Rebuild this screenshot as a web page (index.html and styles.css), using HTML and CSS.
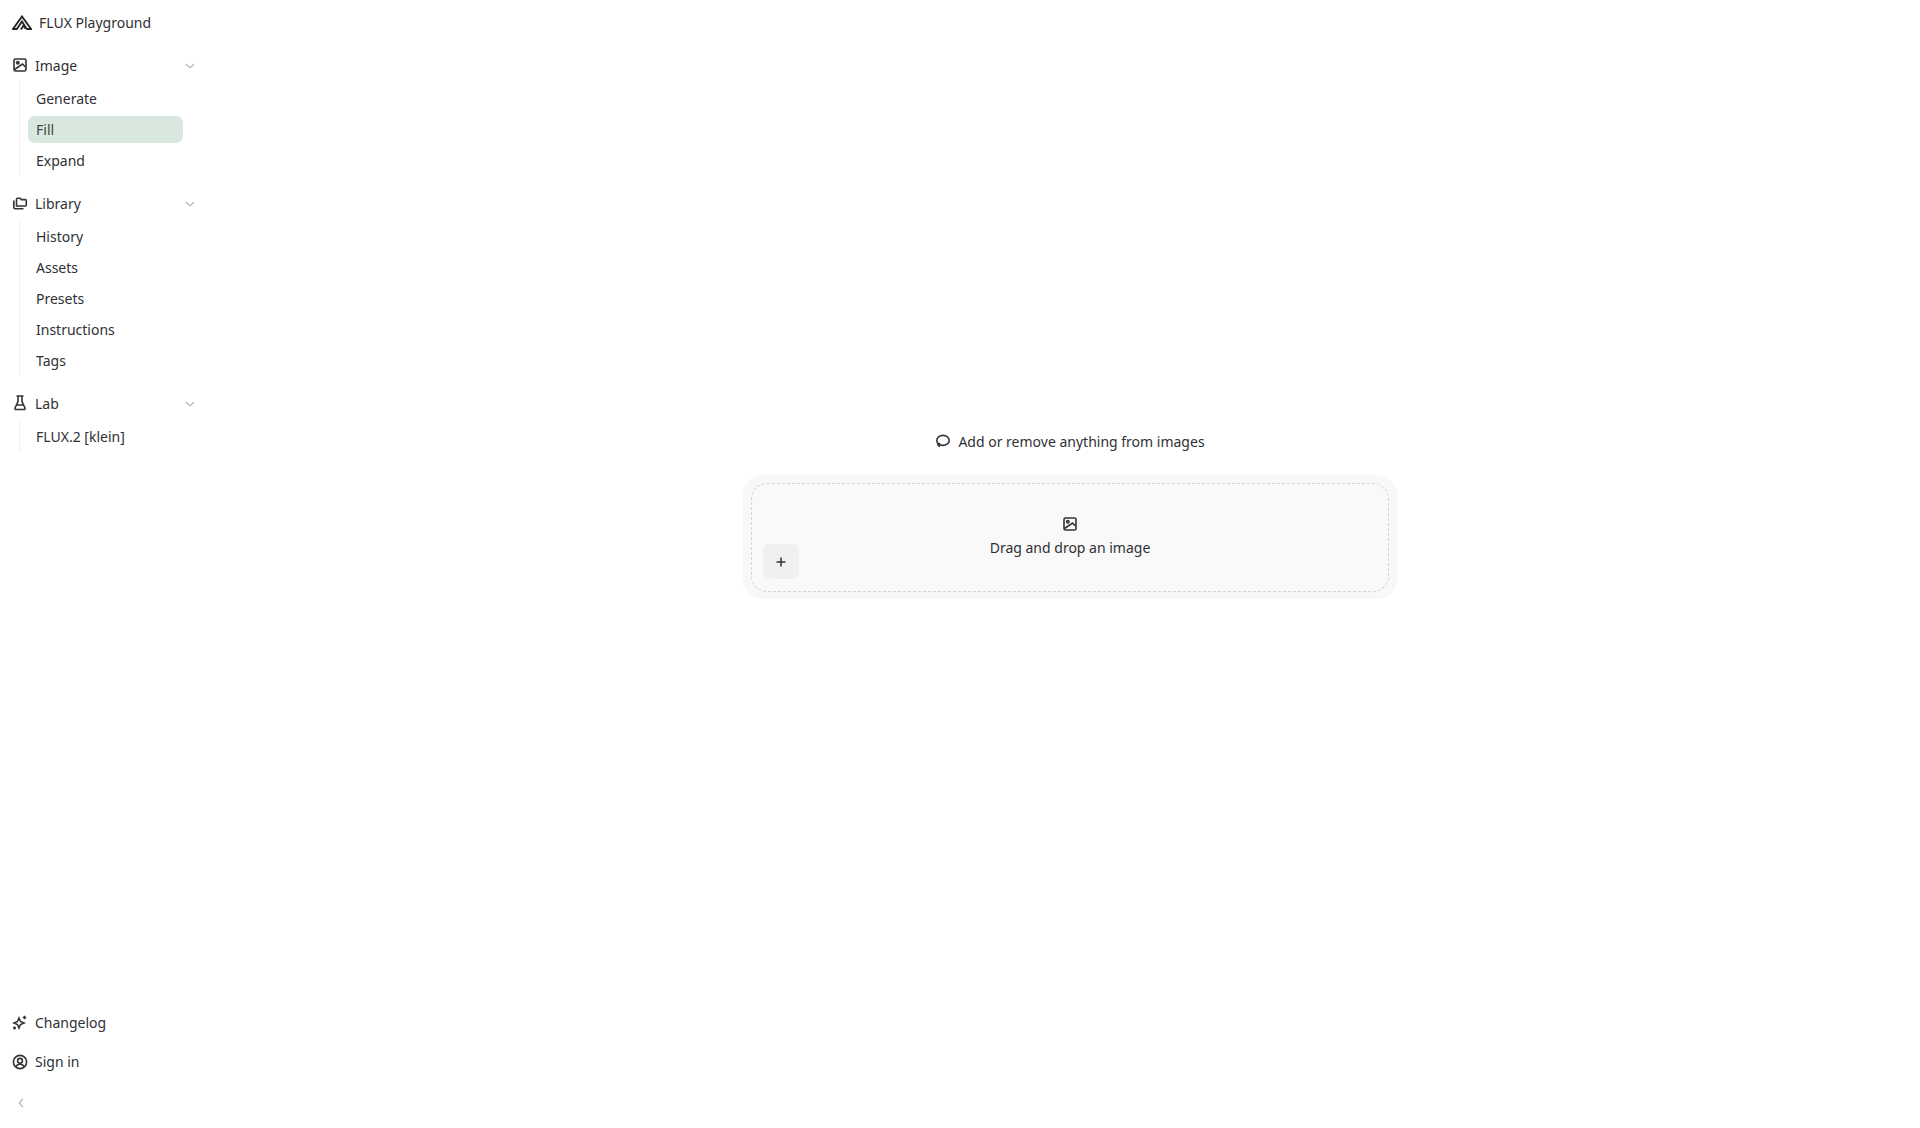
FILE: index.html
```html
<!DOCTYPE html>
<html lang="en">
<head>
    <meta charset="UTF-8">
    <meta name="viewport" content="width=device-width, initial-scale=1.0">
    <title>FLUX Playground</title>
    <link rel="stylesheet" href="styles.css">
</head>
<body>
    <div class="app">
        <aside class="sidebar">
            <div class="brand">
                <svg class="brand-logo" viewBox="0 0 20 15" width="20" height="15" fill="none" stroke="#27272a" stroke-width="1.9">
                    <path d="M5 14H1L10 1.500 19 14h-4"/>
                    <path d="M4.500 14.500L10 6.500l5 8M9 14.500l2.500-4 2 3"/>
                </svg>
                <span>FLUX Playground</span>
            </div>

            <div class="nav-group">
                <div class="nav-head">
                    <svg class="icon" viewBox="0 0 16 16"><rect x="2" y="2" width="12" height="12" rx="1.500"/><circle cx="5.800" cy="5.800" r="1.200"/><path d="M2.500 12.500L10.500 7l3 3"/></svg>
                    <span class="nav-title">Image</span>
                    <svg class="chevron" viewBox="0 0 12 12"><path d="M2 4.200l4 3.600 4-3.600"/></svg>
                </div>
                <div class="nav-list">
                    <a class="nav-item">Generate</a>
                    <a class="nav-item active">Fill</a>
                    <a class="nav-item">Expand</a>
                </div>
            </div>

            <div class="nav-group">
                <div class="nav-head">
                    <svg class="icon" viewBox="0 0 16 16"><path d="M4.500 11V4.200c0-.6.4-1 1-1h2.600l1.200 1.400h4c.6 0 1 .4 1 1V10c0 .6-.4 1-1 1z"/><path d="M1.800 5.500v6.800c0 .8.6 1.400 1.400 1.400h8.300"/></svg>
                    <span class="nav-title">Library</span>
                    <svg class="chevron" viewBox="0 0 12 12"><path d="M2 4.200l4 3.600 4-3.600"/></svg>
                </div>
                <div class="nav-list">
                    <a class="nav-item">History</a>
                    <a class="nav-item">Assets</a>
                    <a class="nav-item">Presets</a>
                    <a class="nav-item">Instructions</a>
                    <a class="nav-item">Tags</a>
                </div>
            </div>

            <div class="nav-group">
                <div class="nav-head">
                    <svg class="icon" viewBox="0 0 16 16"><path d="M4.500 1h7M6 1v5.500L3 13c-.3.8.1 1.500.9 1.500h8.200c.8 0 1.200-.7.900-1.500L10 6.500V1M4.500 10h7"/></svg>
                    <span class="nav-title">Lab</span>
                    <svg class="chevron" viewBox="0 0 12 12"><path d="M2 4.200l4 3.600 4-3.600"/></svg>
                </div>
                <div class="nav-list">
                    <a class="nav-item">FLUX.2 [klein]</a>
                </div>
            </div>

            <div class="sidebar-foot">
                <div class="nav-head foot-row">
                    <svg class="icon" viewBox="0 0 16 16"><path d="M7 3l1.500 3.500L12 8 8.500 9.500 7 13 5.500 9.500 2 8l3.500-1.500z"/><path d="M12.500 .8v3.400M10.800 2.500h3.400M2.500 11.500v3M1 13h3"/></svg>
                    <span class="nav-title">Changelog</span>
                </div>
                <div class="nav-head foot-row">
                    <svg class="icon" viewBox="0 0 16 16"><circle cx="8" cy="8" r="6.600"/><circle cx="8" cy="6.800" r="2.400"/><path d="M3.800 12.800c.8-1.700 2.300-2.500 4.200-2.500s3.400.8 4.200 2.500"/></svg>
                    <span class="nav-title">Sign in</span>
                </div>
                <div class="collapse">
                    <svg class="chevron" viewBox="0 0 12 12"><path d="M7.800 2L4.200 6l3.600 4"/></svg>
                </div>
            </div>
        </aside>

        <main class="content">
            <div class="caption">
                <svg class="icon" viewBox="0 0 16 16"><path d="M4.600 11.600c1 .5 2.200.8 3.400.8 3.400 0 6.200-2.100 6.200-5S11.400 2.400 8 2.400 1.800 4.500 1.800 7.400c0 1.400.7 2.600 1.800 3.500"/><path d="M3.600 10.900c.8.600.9 1.600.3 3.100"/><circle cx="3.900" cy="11.500" r="1"/></svg>
                <span>Add or remove anything from images</span>
            </div>
            <div class="drop-wrap">
                <div class="dropzone">
                    <svg class="icon" viewBox="0 0 16 16"><rect x="2" y="2" width="12" height="12" rx="1.500"/><circle cx="5.800" cy="5.800" r="1.200"/><path d="M2.500 12.500L10.500 7l3 3"/></svg>
                    <span>Drag and drop an image</span>
                    <button class="add-btn">
                        <svg viewBox="0 0 12 12" width="12" height="12"><path d="M6 1.500v9M1.500 6h9"/></svg>
                    </button>
                </div>
            </div>
        </main>
    </div>
</body>
</html>
```

FILE: styles.css
```css
* {
    box-sizing: border-box;
}
body {
    margin: 0;
    background: white;
    font-family: "Noto Sans", "Open Sans", Arial, sans-serif;
    font-size: 14px;
    color: #303034;
}
.app {
    display: flex;
    height: 1128px;
}
.sidebar {
    width: 220px;
    padding: 0 12px;
    display: flex;
    flex-direction: column;
    flex-shrink: 0;
}
.brand {
    display: flex;
    align-items: center;
    gap: 7px;
    height: 44px;
    margin-bottom: 5px;
}
.brand-logo {
    flex-shrink: 0;
}
.nav-group {
    margin-bottom: 11.500px;
}
.nav-head {
    display: flex;
    align-items: center;
    gap: 7px;
    height: 32px;
}
.nav-title {
    flex: 1;
}
.icon {
    width: 16px;
    height: 16px;
    flex-shrink: 0;
    fill: none;
    stroke: #333338;
    stroke-width: 1.6;
}
.chevron {
    width: 12px;
    height: 12px;
    margin-top: 1px;
    margin-right: 12px;
    fill: none;
    stroke: #b4b4b8;
    stroke-width: 1.2;
}
.nav-list {
    display: flex;
    flex-direction: column;
    margin-left: 7px;
    padding-left: 8px;
    padding-top: 1.500px;
    border-left: 1px solid #f1f1f1;
}
.nav-item {
    display: flex;
    align-items: center;
    height: 31px;
    padding-left: 8px;
    width: 155px;
    position: relative;
}
.nav-item.active {
    color: #3f4a44;
}
.nav-item.active::before {
    content: "";
    position: absolute;
    left: 0;
    right: 0;
    top: 2px;
    bottom: 2px;
    background: #d9e8df;
    border-radius: 7px;
    z-index: -1;
}
.sidebar-foot {
    margin-top: auto;
    padding-bottom: 4px;
}
.foot-row {
    height: 39px;
}
.collapse {
    height: 43px;
    display: flex;
    align-items: center;
    padding-left: 3px;
}
.content {
    flex: 1;
    display: flex;
    flex-direction: column;
    align-items: center;
    padding-top: 431px;
}
.caption {
    display: flex;
    align-items: center;
    gap: 7px;
    height: 20px;
    margin-bottom: 24px;
}
.drop-wrap {
    width: 654px;
    height: 124px;
    padding: 8px;
    background: #f8f8f8;
    border-radius: 20px;
}
.dropzone {
    position: relative;
    height: 109px;
    border: 1px dashed #d4d4d4;
    border-radius: 16px;
    background: #f9f9f9;
    display: flex;
    flex-direction: column;
    align-items: center;
    padding-top: 32px;
    gap: 6px;
}
.add-btn {
    position: absolute;
    left: 11px;
    bottom: 12px;
    width: 36px;
    height: 35px;
    padding: 0;
    display: flex;
    align-items: center;
    justify-content: center;
    background: #f0f0f0;
    border: none;
    border-radius: 7px;
    cursor: pointer;
}
.add-btn svg {
    fill: none;
    stroke: #333;
    stroke-width: 1.5;
}
```
